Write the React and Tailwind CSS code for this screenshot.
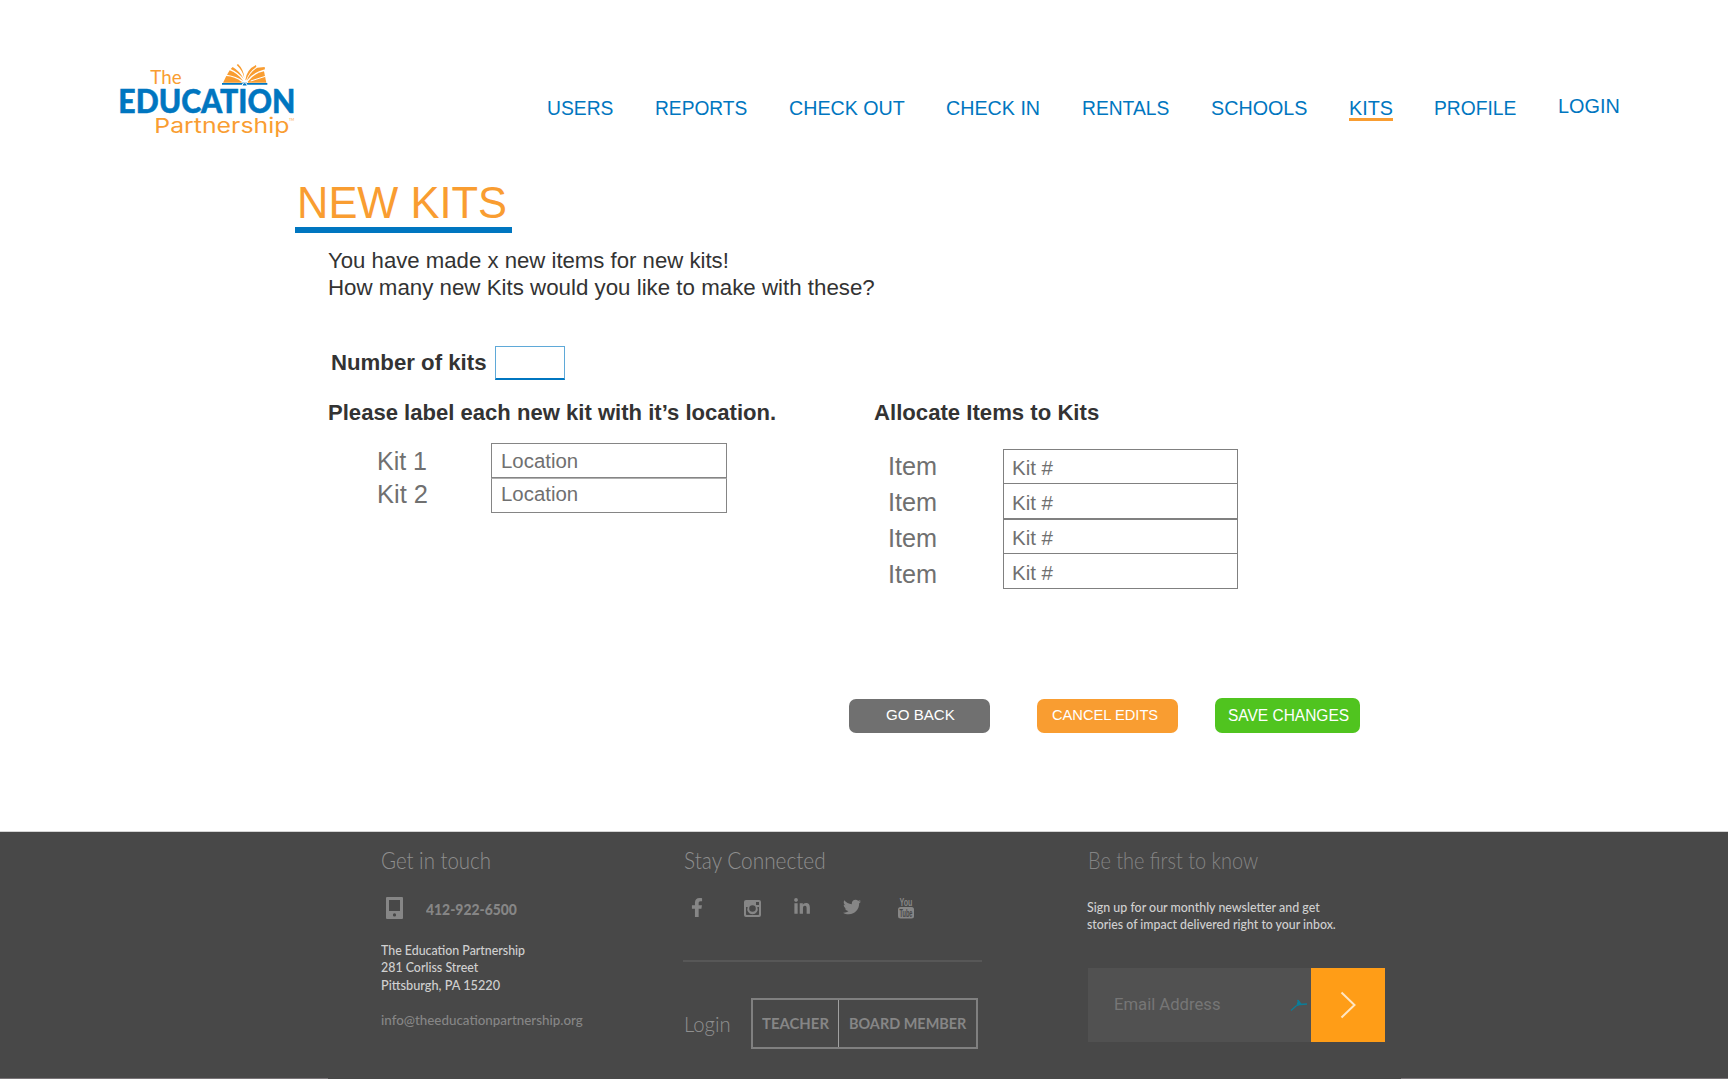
import { useLayoutEffect, useRef, useState } from "react";
import { FaFacebookF, FaLinkedinIn, FaTwitter } from "react-icons/fa";

/* One line of text that is stretched or narrowed to an exact width. */
function Fit({ w, className = "", children }) {
  const ref = useRef(null);
  const [scale, setScale] = useState(1);
  useLayoutEffect(() => {
    const natural = ref.current.offsetWidth;
    if (natural) setScale(w / natural);
  }, [w, children]);
  return (
    <span className={`block shrink-0 whitespace-nowrap ${className}`} style={{ width: w }}>
      <span ref={ref} className="inline-block origin-left align-top" style={{ transform: `scaleX(${scale})` }}>
        {children}
      </span>
    </span>
  );
}

const NAV = [
  ["USERS", 66.5],
  ["REPORTS", 92],
  ["CHECK OUT", 116],
  ["CHECK IN", 94.5],
  ["RENTALS", 87.5],
  ["SCHOOLS", 96.7],
  ["KITS", 43.5],
  ["PROFILE", 82.7],
  ["LOGIN", 61.5],
];

function Logo() {
  return (
    <svg className="mt-[60px] h-20 w-44 shrink-0 overflow-visible" viewBox="60 30 528 240" fontFamily="Lato, sans-serif">
      <g fill="#f99d31">
        <text x="151" y="103" fontSize="55" textLength="94" lengthAdjust="spacingAndGlyphs">The</text>
        <text x="163" y="249" fontSize="61" textLength="405" fontFamily="Inter, sans-serif" fontWeight="400" lengthAdjust="spacingAndGlyphs">Partnership</text>
        <text x="567" y="213" fontSize="12" textLength="15" lengthAdjust="spacingAndGlyphs">TM</text>
        <path d="M369 98 L379 78 Q404 80 426 96 L424 98Z" />
        <path d="M381 74 L389 61 Q413 70 430 93 Q408 78 381 74Z" />
        <path d="M392 57 L398 51 Q420 64 431 87 Q416 68 392 57Z" />
        <path d="M410 45 L414 42 Q431 58 433 84 Q428 62 410 45Z" />
        <path d="M436 90 Q440 58 468 45 L469 51 Q448 64 438 91Z" />
        <path d="M440 92 Q450 66 472 53 L494 51 L495 58 Q456 68 440 92Z" />
        <path d="M443 95 Q462 70 492 64 L499 98 L444 98Z" />
      </g>
      <path d="M452 93 L496 79" stroke="#fff" strokeWidth="3" />
      <path d="M366 99 H425 Q433 94 442 99 H502 V104 H443 Q434 109 425 104 H366Z" fill="#0076c0" />
      <path d="M427 105 Q428 98 434 98 Q440 98 441 105" fill="none" stroke="#fff" strokeWidth="3" />
      <text x="55" y="188" fontSize="95" fontWeight="900" fill="#0076c0" stroke="#0076c0" strokeWidth="1.5" textLength="531" lengthAdjust="spacingAndGlyphs">EDUCATION</text>
    </svg>
  );
}

function Header() {
  return (
    <header className="flex h-[177px] shrink-0 items-start pl-[120px]">
      <Logo />
      <nav className="mt-24 ml-[251px] flex gap-[41.5px] text-[20px] leading-6 text-[#0076c0]">
        {NAV.map(([label, w]) => (
          <a
            key={label}
            className={
              label === "KITS"
                ? "h-[25px] border-b-[3px] border-[#f99d31]"
                : label === "LOGIN"
                  ? "-mt-0.5 h-6"
                  : "h-6"
            }
          >
            <Fit w={w} className={label === "KITS" ? "h-[22px]" : ""}>{label}</Fit>
          </a>
        ))}
      </nav>
    </header>
  );
}

function KitLocations() {
  return (
    <div className="w-[546.5px] shrink-0">
      <Fit w={448.5} className="text-[22px] leading-[27px] font-bold text-[#333]">
        Please label each new kit with it’s location.
      </Fit>
      <div className="mt-[17px] flex pl-[48.5px]">
        <div className="w-[115px] pt-[2px] pl-px text-[25px] leading-[33px]">
          <Fit w={50}>Kit 1</Fit>
          <Fit w={51}>Kit 2</Fit>
        </div>
        <div className="w-[236px] text-[20px]">
          <div className="h-[35px] border border-[#858585] pl-[9px] leading-[34px]">
            <Fit w={77.5}>Location</Fit>
          </div>
          <div className="h-[35px] border border-t-[#b0b0b0] border-[#858585] pl-[9px] leading-[30px]">
            <Fit w={77.5}>Location</Fit>
          </div>
        </div>
      </div>
    </div>
  );
}

function ItemAllocation() {
  return (
    <div>
      <Fit w={225.5} className="text-[22px] leading-[27px] font-bold text-[#333]">
        Allocate Items to Kits
      </Fit>
      <div className="mt-[23px] flex pl-[13.5px]">
        <div className="-mt-px w-[115.5px] text-[25px] leading-9">
          {[1, 2, 3, 4].map((n) => (
            <Fit key={n} w={49.5}>Item</Fit>
          ))}
        </div>
        <div className="w-[235px] text-[20px]">
          {[1, 2, 3, 4].map((n) => (
            <div
              key={n}
              className={
                n % 2
                  ? "h-[35px] border border-[#808080] pl-[8px] leading-9"
                  : "h-[35px] border border-t-0 border-[#808080] pl-[8px] leading-[39px]"
              }
            >
              <Fit w={41}>Kit #</Fit>
            </div>
          ))}
        </div>
      </div>
    </div>
  );
}

function Actions() {
  return (
    <div className="mt-[109px] flex h-[35px] pl-[849px] text-white">
      <button className="mt-px h-[33.5px] w-[141px] rounded-[7px] bg-[#707070] pl-[36.5px] text-left text-[15px] leading-[31px]">
        <Fit w={68.5} className="h-[33px]">GO BACK</Fit>
      </button>
      <button className="mt-px ml-[47px] h-[33.5px] w-[141px] rounded-[7px] bg-[#f99d31] pl-[14.5px] text-left text-[15px] leading-[31px]">
        <Fit w={106.5} className="h-[33px]">CANCEL EDITS</Fit>
      </button>
      <button className="ml-[37px] h-[35px] w-[145px] rounded-[7px] bg-[#50c41f] pl-[12.5px] text-left text-[16px] leading-[35px]">
        <Fit w={121}>SAVE CHANGES</Fit>
      </button>
    </div>
  );
}

function PhoneIcon() {
  return (
    <svg className="ml-[4.5px] h-[22px] w-[17px]" viewBox="0 0 17 22" fill="#868686">
      <path fillRule="evenodd" d="M1 0H16a1 1 0 0 1 1 1V21a1 1 0 0 1-1 1H1a1 1 0 0 1-1-1V1a1 1 0 0 1 1-1ZM3 3V14H14V3ZM8.5 16.300a1.600 1.600 0 1 0 0 3.200a1.600 1.600 0 0 0 0-3.200Z" />
    </svg>
  );
}

function InstagramIcon() {
  return (
    <svg className="ml-[39.5px] h-[17px] w-[17px]" viewBox="0 0 17 17" fill="#868686">
      <path fillRule="evenodd" d="M2 0H15a2 2 0 0 1 2 2V15a2 2 0 0 1-2 2H2a2 2 0 0 1-2-2V2a2 2 0 0 1 2-2ZM2 7V14.200Q2 15 2.800 15H14.200Q15 15 15 14.200V7H13.300A5.200 5.200 0 1 1 3.700 7ZM12 2V5H15V2ZM8.500 5.200a3.300 3.300 0 1 0 0 6.600a3.300 3.300 0 0 0 0-6.600Z" />
    </svg>
  );
}

function YoutubeIcon() {
  return (
    <svg className="-mt-px ml-[37px] h-[22px] w-4 overflow-visible" viewBox="0 0 16 22" fontFamily="'Liberation Sans', sans-serif" fontWeight="700">
      <text x="1.5" y="9" fontSize="11.5" fill="#868686" textLength="13" lengthAdjust="spacingAndGlyphs">You</text>
      <rect y="10" width="16" height="11.5" rx="2.5" fill="#868686" />
      <text x="1.5" y="19.500" fontSize="10.5" fill="#484848" textLength="13" lengthAdjust="spacingAndGlyphs">Tube</text>
    </svg>
  );
}

function Footer() {
  return (
    <footer className="mt-[98px] flex flex-1 flex-col justify-between border-t border-[#d4d4d4] bg-[#484848] font-['Lato',sans-serif] text-[#868686]">
      <div className="flex pt-[15px] pl-[381px]">
        <div className="w-[302px] shrink-0">
          <Fit w={110} className="text-[22.5px] leading-7 font-light text-[#8f8f8f]">Get in touch</Fit>
          <div className="mt-[22px] flex h-[22px]">
            <PhoneIcon />
            <Fit w={90.5} className="mt-px ml-[23.5px] text-[15.5px] leading-[22px] font-black">412-922-6500</Fit>
          </div>
          <div className="mt-[21.5px] text-[14px] leading-[17.7px] font-medium text-[#d0d0d0]">
            <Fit w={144}>The Education Partnership</Fit>
            <Fit w={97.5}>281 Corliss Street</Fit>
            <Fit w={119}>Pittsburgh, PA 15220</Fit>
          </div>
          <Fit w={201.5} className="mt-[17px] text-[14px] leading-[17.7px] font-medium">info@theeducationpartnership.org</Fit>
        </div>

        <div className="w-[405px] shrink-0">
          <Fit w={141.5} className="pl-px text-[22.5px] leading-7 font-light text-[#8f8f8f]">Stay Connected</Fit>
          <div className="mt-[22px] flex h-[22px] items-center">
            <FaFacebookF className="-mt-px ml-[7px] h-[19px] w-[14px]" />
            <InstagramIcon />
            <FaLinkedinIn className="-mt-0.5 ml-[32px] h-[18px] w-[18px]" />
            <FaTwitter className="-mt-0.5 ml-[32px] h-[18px] w-[18px]" />
            <YoutubeIcon />
          </div>
          <div className="mt-[41px] h-0.5 w-[299px] bg-[#575757]" />
          <div className="mt-9 flex h-[51px]">
            <Fit w={47} className="ml-[1px] text-[22px] leading-[51px] font-light text-[#8f8f8f]">Login</Fit>
            <div className="ml-5 flex h-[51px] w-[227px] border-2 border-[#808080] text-[15px] leading-[46px] font-bold">
              <div className="w-[86px] border-r-[1.5px] border-[#a0a0a0] pl-[9px]">
                <Fit w={66.5} className="h-[46px]">TEACHER</Fit>
              </div>
              <Fit w={117.5} className="ml-[9.5px] h-[46px]">BOARD MEMBER</Fit>
            </div>
          </div>
        </div>

        <div className="w-[297px] shrink-0">
          <Fit w={170} className="text-[22.5px] leading-7 font-light text-[#848484]">Be the first to know</Fit>
          <div className="mt-[22.5px] -ml-px text-[14px] leading-[17.7px] font-medium text-[#d0d0d0]">
            <Fit w={232.5}>Sign up for our monthly newsletter and get</Fit>
            <Fit w={249}>stories of impact delivered right to your inbox.</Fit>
          </div>
          <div className="mt-[35px] -ml-[0.5px] flex h-[74px]">
            <div className="flex w-[223.5px] items-center justify-between bg-[#515151] pt-px pr-[3px] pl-[26px] font-['Roboto',sans-serif] text-[16.5px] text-[#767676]">
              <Fit w={107}>Email Address</Fit>
              <svg className="h-3 w-[18px]" viewBox="0 0 18 12" fill="none" stroke="#0b7d99">
                <path d="M1 11.500L6 7L10 5.500L17 5M7 6.500L10.500 4.500L7.500 1" strokeWidth="1.3" />
                <path d="M8.500 1.500L10.500 5L7 6Z" fill="#0b7d99" />
              </svg>
            </div>
            <button className="flex w-[73.5px] items-center justify-center bg-[#ff9d17]">
              <svg className="h-7 w-4" viewBox="0 0 16 28" fill="none" stroke="#ffe6c4" strokeWidth="2">
                <path d="M1.500 1.500L14.500 14L1.500 26.500" />
              </svg>
            </button>
          </div>
        </div>
      </div>
      <div className="flex h-px justify-between">
        <div className="w-[328px] bg-[#787477]" />
        <div className="w-[327px] bg-[#787477]" />
      </div>
    </footer>
  );
}

export default function App() {
  return (
    <div className="flex h-[1079px] w-[1728px] flex-col overflow-hidden bg-white font-['Liberation_Sans',Arial,sans-serif] text-[#707070]">
      <Header />
      <main className="shrink-0">
        <h1 className="ml-[295px] h-14 w-[217px] border-b-[6px] border-[#0076c0] text-[45px] leading-[52px] text-[#f99d31]">
          <Fit w={210.5} className="ml-[1.5px] h-[50px]">NEW KITS</Fit>
        </h1>
        <div className="mt-[14px] pl-[328px] text-[22px] leading-[27px] text-[#333]">
          <Fit w={401}>You have made x new items for new kits!</Fit>
          <Fit w={546.5}>How many new Kits would you like to make with these?</Fit>
        </div>
        <div className="mt-[45px] flex h-[34px] gap-2 pl-[331px]">
          <Fit w={155.5} className="text-[22px] leading-[33px] font-bold text-[#333]">Number of kits</Fit>
          <input className="h-[34px] w-[70.5px] border border-b-2 border-[#5fa9d8] border-b-[#0076c0] bg-white" />
        </div>
        <section className="mt-[19px] flex h-[190px] pl-[327.5px]">
          <KitLocations />
          <ItemAllocation />
        </section>
        <Actions />
      </main>
      <Footer />
    </div>
  );
}
